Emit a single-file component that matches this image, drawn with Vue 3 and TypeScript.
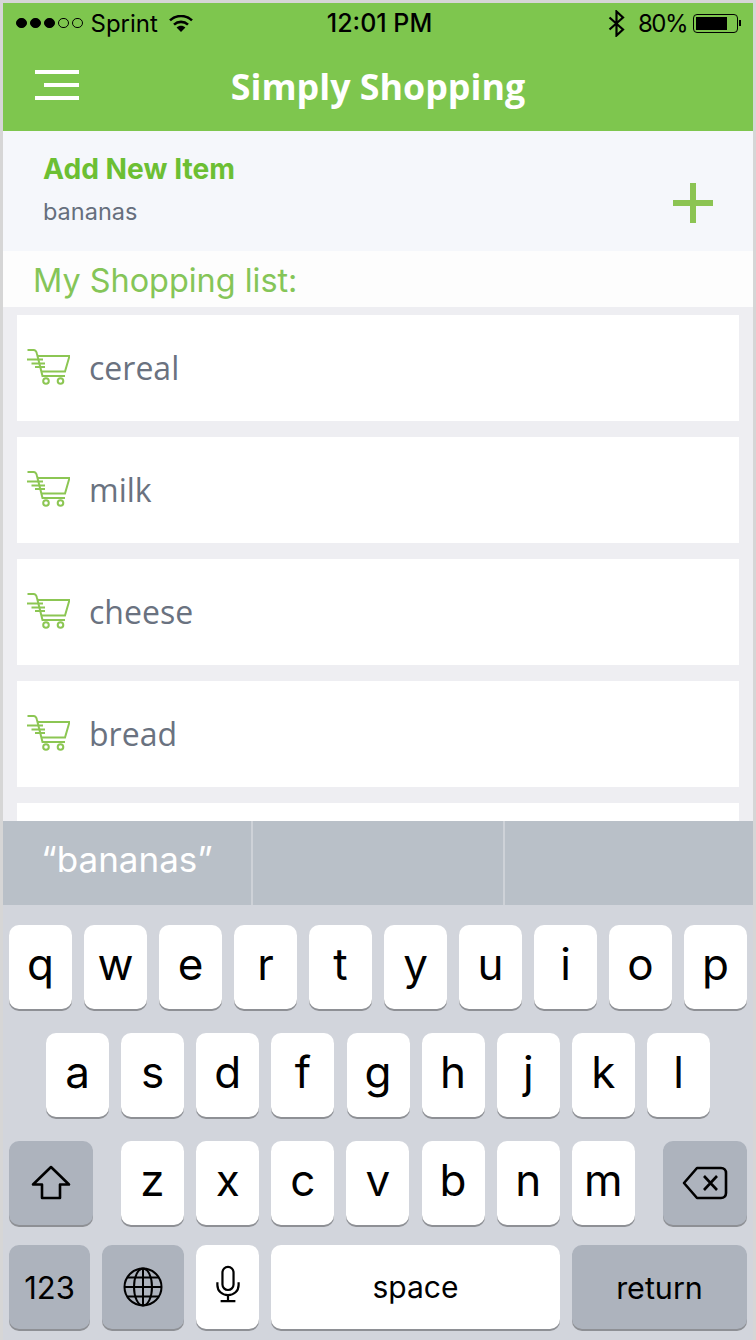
<template>
  <div class="phone">
    <header class="top">
      <div class="status">
        <div class="status-side">
          <span class="signal">
            <i v-for="n in 5" :key="n" :class="['dot', { on: n <= 3 }]"></i>
          </span>
          <span class="carrier">Sprint</span>
          <svg class="wifi" viewBox="0 0 24 17" width="24" height="17">
            <path d="M1 5.4C7.2 -0.4 16.8 -0.4 23 5.4" fill="none" stroke="#000" stroke-width="2.6" />
            <path d="M5 9.6C9 6 15 6 19 9.6" fill="none" stroke="#000" stroke-width="2.6" />
            <path d="M7.6 12.4C10.2 10.2 13.8 10.2 16.4 12.4L12 17Z" fill="#000" />
          </svg>
        </div>
        <span class="time">12:01 PM</span>
        <div class="status-side right">
          <svg class="bt" viewBox="0 0 17 27" width="17" height="27">
            <path d="M1.5 7.5L15 19.5L8.5 25.5V1.5L15 7.5L1.5 19.5" fill="none" stroke="#000" stroke-width="2.2" />
          </svg>
          <span class="pct">80%</span>
          <span class="battery"><i></i></span>
          <span class="nub"></span>
        </div>
      </div>
      <div class="nav">
        <button class="menu" aria-label="Menu"><i></i><i class="short"></i><i></i></button>
        <h1>Simply Shopping</h1>
      </div>
    </header>

    <section class="add">
      <div>
        <div class="add-label">Add New Item</div>
        <div class="add-value">bananas</div>
      </div>
      <span class="plus"></span>
    </section>

    <h2 class="list-title">My Shopping list:</h2>

    <ul class="list">
      <li v-for="item in items" :key="item" class="item">
        <svg v-if="item" class="cart" viewBox="0 0 43 37" width="43" height="37">
          <g fill="none" stroke="#8cc653" stroke-width="2">
            <path d="M0.5 1H6.5C8.5 1 9.5 2.5 10 5L15.5 27H38" />
            <path d="M10.5 7H42.5L38 22.5H14" />
            <circle cx="19" cy="32" r="2.8" />
            <circle cx="33.5" cy="32" r="2.8" />
            <path d="M0 10.5H16M4.5 14.5H18M8 18H18" />
          </g>
        </svg>
        <span>{{ item }}</span>
      </li>
    </ul>

    <div class="suggest">
      <div class="cell">“bananas”</div>
      <div class="cell"></div>
      <div class="cell"></div>
    </div>

    <div class="keyboard">
      <div class="row">
        <button v-for="k in rowOne" :key="k" class="key">{{ k }}</button>
      </div>
      <div class="row second">
        <button v-for="k in rowTwo" :key="k" class="key">{{ k }}</button>
      </div>
      <div class="row spread">
        <button class="key dark wide" aria-label="Shift">
          <svg viewBox="0 0 40 36" width="40" height="36">
            <path d="M20 2L38 19.5H29V33H11V19.5H2Z" fill="none" stroke="#000" stroke-width="2.6" stroke-linejoin="round" />
          </svg>
        </button>
        <div class="group">
          <button v-for="k in rowThree" :key="k" class="key">{{ k }}</button>
        </div>
        <button class="key dark wide" aria-label="Delete">
          <svg viewBox="0 0 46 34" width="46" height="34">
            <path d="M15 2H39C42 2 44 4 44 7V27C44 30 42 32 39 32H15L2 17Z" fill="none" stroke="#000" stroke-width="2.6" stroke-linejoin="round" />
            <path d="M22 10L35 24M35 10L22 24" fill="none" stroke="#000" stroke-width="2.6" />
          </svg>
        </button>
      </div>
      <div class="row bottom">
        <button class="key dark num">123</button>
        <button class="key dark globe" aria-label="Globe">
          <svg viewBox="0 0 40 40" width="40" height="40">
            <g fill="none" stroke="#000" stroke-width="2">
              <circle cx="20" cy="20" r="18.5" />
              <ellipse cx="20" cy="20" rx="9" ry="18.5" />
              <path d="M20 1.5V38.5M1.5 20H38.5M4.5 10.5H35.5M4.5 29.5H35.5" />
            </g>
          </svg>
        </button>
        <button class="key" aria-label="Dictate">
          <svg viewBox="0 0 26 40" width="24" height="40">
            <g fill="none" stroke="#000" stroke-width="2.4">
              <rect x="7" y="1.5" width="12" height="25" rx="6" />
              <path d="M1.5 18V21C1.5 27.5 6.5 32 13 32S24.5 27.5 24.5 21V18" />
              <path d="M13 32V38.5M5 38.5H21" />
            </g>
          </svg>
        </button>
        <button class="key space">space</button>
        <button class="key dark return">return</button>
      </div>
    </div>
  </div>
</template>

<script setup lang="ts">
const items: string[] = ['cereal', 'milk', 'cheese', 'bread', '']

const rowOne = 'qwertyuiop'.split('')
const rowTwo = 'asdfghjkl'.split('')
const rowThree = 'zxcvbnm'.split('')
</script>

<style>
html,
body {
  margin: 0;
  background: #d6d6d6;
}
</style>

<style scoped>
.phone {
  display: flex;
  flex-direction: column;
  width: 750px;
  height: 1337px;
  margin: 0 3px;
  padding-top: 3px;
  overflow: hidden;
  font-family: Inter, "Liberation Sans", sans-serif;
}

.top {
  flex: none;
  height: 128px;
  background: #7ec64e;
}

.status {
  display: flex;
  align-items: center;
  justify-content: space-between;
  height: 40px;
  padding: 0 12px 0 13px;
  color: #000;
  font-size: 24px;
}

.status-side {
  display: flex;
  align-items: center;
  width: 180px;
}

.status-side.right {
  justify-content: flex-end;
}

.signal {
  display: flex;
  gap: 3.5px;
}

.dot {
  box-sizing: border-box;
  width: 10.5px;
  height: 10.5px;
  border: 1px solid #000;
  border-radius: 50%;
}

.dot.on {
  background: #000;
}

.carrier {
  margin-left: 8px;
}

.wifi {
  margin-left: 11px;
}

.time {
  margin-left: 2px;
  font-size: 25px;
  font-weight: 500;
}

.pct {
  margin-left: 13px;
  letter-spacing: -1.5px;
}

.battery {
  box-sizing: border-box;
  width: 45px;
  height: 19px;
  margin-left: 6px;
  padding: 2px;
  border: 1px solid #000;
  border-radius: 4px;
}

.battery i {
  display: block;
  width: 80%;
  height: 100%;
  background: #000;
}

.nub {
  width: 2px;
  height: 6px;
  margin-left: 1px;
  background: #000;
}

.nav {
  position: relative;
  display: flex;
  align-items: center;
  justify-content: center;
  height: 88px;
}

.nav h1 {
  margin: 0 0 3px;
  color: #fff;
  font-family: "Open Sans", sans-serif;
  font-size: 35.8px;
  font-weight: 700;
}

.menu {
  position: absolute;
  top: 27px;
  left: 32px;
  display: flex;
  flex-direction: column;
  align-items: flex-end;
  gap: 9px;
  width: 44px;
  padding: 0;
  border: 0;
  background: none;
}

.menu i {
  display: block;
  width: 44px;
  height: 4px;
  background: #fff;
}

.menu i.short {
  width: 35px;
}

.add {
  display: flex;
  flex: none;
  justify-content: space-between;
  box-sizing: border-box;
  height: 120px;
  padding: 20px 40px 0 40px;
  background: #f5f7fb;
}

.add-label {
  color: #6cbf33;
  font-size: 28.2px;
  font-weight: 700;
  line-height: 36px;
}

.add-value {
  margin-top: 11px;
  color: #666f7d;
  font-size: 23.5px;
  line-height: 28px;
}

.plus {
  position: relative;
  width: 40px;
  height: 40px;
  margin-top: 32px;
}

.plus::before,
.plus::after {
  position: absolute;
  background: #8cc453;
  content: "";
}

.plus::before {
  top: 17px;
  left: 0;
  width: 40px;
  height: 6px;
}

.plus::after {
  top: 0;
  left: 17px;
  width: 6px;
  height: 40px;
}

.list-title {
  flex: none;
  box-sizing: border-box;
  height: 56px;
  margin: 0;
  padding-left: 30px;
  background: #fdfdfd;
  color: #85c558;
  font-size: 32.4px;
  font-weight: 400;
  line-height: 60px;
}

.list {
  flex: 1;
  min-height: 0;
  margin: 0;
  padding: 8px 14px 0;
  overflow: hidden;
  background: #eeeef2;
  list-style: none;
}

.item {
  display: flex;
  align-items: center;
  gap: 19px;
  box-sizing: border-box;
  height: 106px;
  margin-bottom: 16px;
  padding: 0 0 2px 10px;
  background: #fff;
  color: #6a7280;
  font-family: "Open Sans", sans-serif;
  font-size: 32px;
}

.suggest {
  display: grid;
  flex: none;
  grid-template-columns: 248px 252px 250px;
  height: 84px;
  background: #b9c0c8;
}

.cell {
  color: #fff;
  font-size: 35px;
  font-weight: 400;
  line-height: 76px;
  text-align: center;
}

.cell + .cell {
  border-left: 2px solid #ced2d8;
}

.keyboard {
  display: flex;
  flex: none;
  flex-direction: column;
  gap: 24px;
  height: 435px;
  box-sizing: border-box;
  padding: 20px 6px 0;
  background: #d2d5dc;
}

.row {
  display: flex;
  justify-content: center;
  gap: 12px;
}

.row.second {
  gap: 12.125px;
}

.row.spread {
  justify-content: flex-start;
  gap: 28px;
}

.row.bottom {
  margin-top: -4px;
  justify-content: flex-start;
}

.group {
  display: flex;
  gap: 12.15px;
}

.key {
  display: flex;
  flex: none;
  align-items: center;
  justify-content: center;
  width: 63px;
  height: 84px;
  padding: 0 0 6px;
  border: 0;
  border-radius: 10px;
  background: #fff;
  box-shadow: 0 2px 0 #8e9095;
  color: #000;
  font-family: Inter, "Liberation Sans", sans-serif;
  font-size: 44px;
  font-weight: 375;
}

.key.dark {
  background: #adb3bd;
}

.key.wide {
  width: 84px;
  padding: 0;
}

.key.num {
  width: 81px;
  padding: 0;
  font-size: 31px;
  font-weight: 400;
}

.key.globe {
  width: 82px;
  padding: 0;
}

.key.space {
  width: 289px;
  padding: 0;
  font-size: 30px;
  font-weight: 400;
}

.key.return {
  width: 175px;
  padding: 0;
  font-size: 30.5px;
  font-weight: 400;
}
</style>
